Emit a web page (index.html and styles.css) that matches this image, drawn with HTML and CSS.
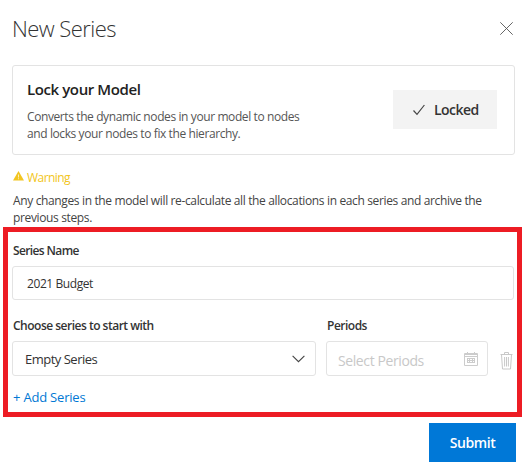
FILE: index.html
```html
<!DOCTYPE html>
<html lang="en">
<head>
<meta charset="utf-8">
<title>New Series</title>
<link rel="stylesheet" href="styles.css">
</head>
<body>
<main class="panel">
  <header class="header">
    <h1 class="title">New Series</h1>
    <svg class="close" width="13" height="13" viewBox="0 0 13 13"><path d="M.3.3 12.7 12.7M12.7.3.3 12.7"/></svg>
  </header>
  <section class="card">
    <div>
      <h2 class="card-title">Lock your Model</h2>
      <p class="card-text">Converts the dynamic nodes in your model to nodes<br>and locks your nodes to fix the hierarchy.</p>
    </div>
    <button class="locked">
      <svg width="12" height="12" viewBox="0 0 12 12"><path d="M.5 6.5 4 10.3 11.4 1"/></svg>
      <span>Locked</span>
    </button>
  </section>
  <section class="notice">
    <div class="warning">
      <svg width="11" height="10" viewBox="0 0 11 10"><path fill="#f2c521" d="M5.5 0 11 9.5H0Z"/><path fill="#fff" fill-opacity=".7" d="M5 3.4h1v3H5zM5 7.3h1v1H5z"/></svg>
      <span>Warning</span>
    </div>
    <p class="notice-text">Any changes in the model will re-calculate all the allocations in each series and archive the<br><span class="steps">previous steps.</span></p>
  </section>
  <form class="form">
    <div class="label name-label">Series Name</div>
    <div class="field name-field"><span>2021 Budget</span></div>
    <div class="row">
      <div class="start">
        <div class="label start-label">Choose series to start with</div>
        <div class="field select-field"><span>Empty Series</span>
          <svg width="13" height="8" viewBox="0 0 13 8"><path d="M.6.8 6.5 6.7 12.4.8"/></svg>
        </div>
      </div>
      <div class="periods">
        <div class="label periods-label">Periods</div>
        <div class="field date-field"><span>Select Periods</span>
          <svg width="14" height="14" viewBox="0 0 14 14"><path d="M.5 1.5h13v12H.5zM.5 4.5h13M3.5 0v3M10.5 0v3M1 2.5h12"/><path d="M3 6.5h8M3 8.5h8M3 10.5h8M3.5 6v5M5.5 6v5M8.5 6v5M10.5 6v5"/></svg>
        </div>
      </div>
      <svg class="trash" width="13" height="18" viewBox="0 0 13 18"><path d="M.5 2.5h12M4.5 2.5v-2h4v2M1.5 2.5l1 14.5h8l1-14.5M4.6 5v9.5M6.5 5v9.5M8.4 5v9.5"/></svg>
    </div>
    <a class="add">+ Add Series</a>
  </form>
  <footer class="footer"><button class="submit"><span>Submit</span></button></footer>
</main>
</body>
</html>
```
FILE: styles.css
```css
* { box-sizing: border-box; }
body { margin: 0; background: #fff; color: #333; font: 12px/17px "Open Sans", "Noto Sans", sans-serif; }
h1, h2, p { margin: 0; }
svg { display: block; flex: none; fill: none; stroke: none; }
button { font-family: inherit; border: 0; padding: 0; margin: 0; }
.panel { width: 525px; height: 471px; padding: 14px 9px 0 3px; overflow: hidden; white-space: nowrap; }
.header { display: flex; justify-content: space-between; height: 51px; padding: 0 0 0 9px; }
.title { font-size: 22px; line-height: 28px; font-weight: 300; letter-spacing: -.55px; color: #333; }
.close { margin: 8px 3px 0 0; stroke: #555; stroke-width: .9; }
.card { display: flex; justify-content: space-between; align-items: flex-start; height: 90px; margin: 0 1px 0 9px; padding: 13px 17px 0 14px; border: 1px solid #e3e3e3; border-radius: 3px; }
.card-title { font-size: 15px; line-height: 20px; font-weight: 600; letter-spacing: -.4px; color: #222; }
.card-text { margin-top: 9px; letter-spacing: -.4px; color: #555; }
.locked { display: flex; align-items: center; width: 104px; height: 39px; margin-top: 11px; padding-left: 20px; gap: 9px; background: #f3f3f3; color: #333; font-size: 14px; font-weight: 600; letter-spacing: -.55px; }
.locked svg { stroke: #444; stroke-width: 1.2; }
.notice { height: 72px; margin-left: 9px; padding-top: 14px; }
.warning { display: flex; height: 17px; gap: 3px; margin-left: 1px; color: #f2c521; letter-spacing: -.55px; }
.warning svg { margin-top: 2px; }
.notice-text { margin: 6px 0 0 1px; letter-spacing: -.36px; color: #444; }
.form { width: 519px; height: 190px; padding: 10px 2px 0 4px; border: 5px solid #ed1c24; }
.label { height: 17px; margin-left: 1px; font-weight: 600; letter-spacing: -.5px; }
.name-label { letter-spacing: -.62px; }
.field { display: flex; align-items: center; justify-content: space-between; height: 35px; border: 1px solid #e3e3e3; border-radius: 3px; }
.name-field { height: 34px; margin: 7px 1px 0 0; padding: 1px 0 0 14px; letter-spacing: -.42px; }
.row { display: flex; margin-top: 17px; }
.start { width: 304px; margin-right: 10px; }
.periods { width: 162px; }
.row .field { margin-top: 7px; }
.select-field { padding: 2px 10px 0 12px; font-size: 13px; letter-spacing: -.5px; }
.select-field svg { stroke: #444; stroke-width: 1.1; margin-bottom: 1px; }
.date-field { padding: 4px 9px 0 11px; font-size: 14px; letter-spacing: -.4px; color: #c8c8c8; }
.date-field svg { stroke: #ccc; stroke-width: 1; margin-bottom: 3px; }
.trash { margin: 35px 0 0 12px; stroke: #c8c8c8; stroke-width: 1; }
.add { display: block; margin: 13px 0 0 1px; font-size: 13px; color: #0078d4; letter-spacing: -.2px; }
.footer { display: flex; justify-content: flex-end; padding-top: 6px; }
.submit { width: 87px; height: 39px; background: #0078d7; color: #fff; font-size: 14px; font-weight: 600; letter-spacing: -.4px; }
```
